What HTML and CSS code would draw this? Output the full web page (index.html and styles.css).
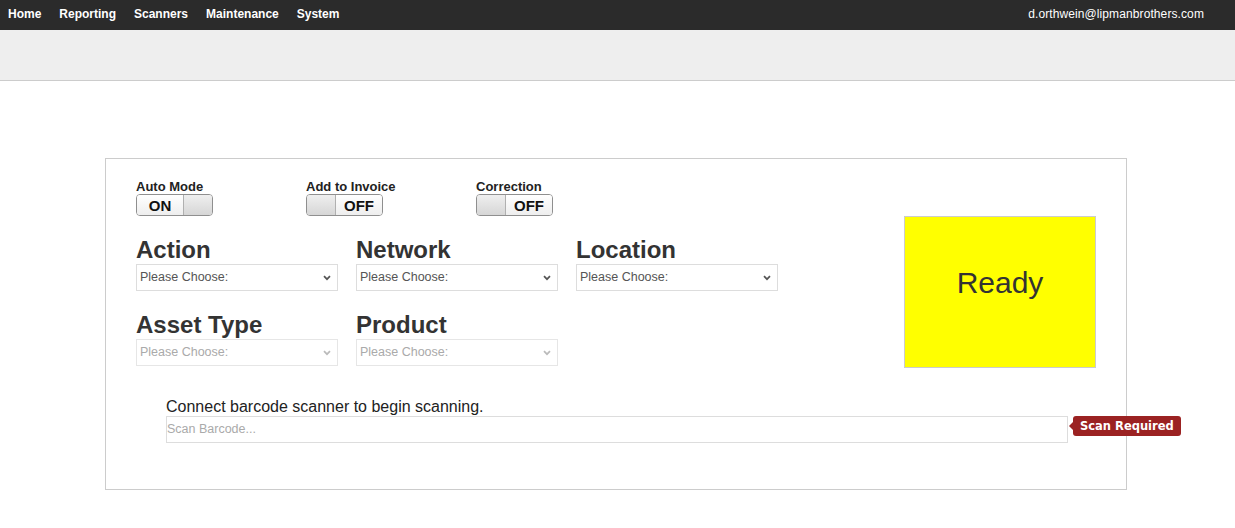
FILE: index.html
```html
<!DOCTYPE html>
<html>
<head>
<meta charset="utf-8">
<title>Scanning</title>
<link rel="stylesheet" href="styles.css">
</head>
<body>
<header class="topnav">
  <nav class="nav-links">
    <a class="nav-link" href="#">Home</a>
    <a class="nav-link" href="#">Reporting</a>
    <a class="nav-link" href="#">Scanners</a>
    <a class="nav-link" href="#">Maintenance</a>
    <a class="nav-link" href="#">System</a>
  </nav>
  <div class="nav-user">d.orthwein@lipmanbrothers.com</div>
</header>
<div class="subbar"></div>

<main class="panel">
  <div class="top-area">
    <div class="form-area">
      <div class="toggles">
        <div class="toggle-group">
          <div class="toggle-label">Auto Mode</div>
          <div class="toggle">
            <span class="toggle-text on">ON</span>
            <span class="toggle-knob knob-right"></span>
          </div>
        </div>
        <div class="toggle-group">
          <div class="toggle-label">Add to Invoice</div>
          <div class="toggle">
            <span class="toggle-knob knob-left"></span>
            <span class="toggle-text off">OFF</span>
          </div>
        </div>
        <div class="toggle-group">
          <div class="toggle-label">Correction</div>
          <div class="toggle">
            <span class="toggle-knob knob-left"></span>
            <span class="toggle-text off">OFF</span>
          </div>
        </div>
      </div>

      <div class="fields">
        <div class="field">
          <h2 class="field-title">Action</h2>
          <div class="select-wrap">
            <select class="select"><option>Please Choose:</option></select>
            <svg class="chev" width="8" height="6" viewBox="0 0 8 6"><path d="M1 1.2 L4 4.2 L7 1.2" fill="none" stroke="#555" stroke-width="1.7"/></svg>
          </div>
        </div>
        <div class="field">
          <h2 class="field-title">Network</h2>
          <div class="select-wrap">
            <select class="select"><option>Please Choose:</option></select>
            <svg class="chev" width="8" height="6" viewBox="0 0 8 6"><path d="M1 1.2 L4 4.2 L7 1.2" fill="none" stroke="#555" stroke-width="1.7"/></svg>
          </div>
        </div>
        <div class="field">
          <h2 class="field-title">Location</h2>
          <div class="select-wrap">
            <select class="select"><option>Please Choose:</option></select>
            <svg class="chev" width="8" height="6" viewBox="0 0 8 6"><path d="M1 1.2 L4 4.2 L7 1.2" fill="none" stroke="#555" stroke-width="1.7"/></svg>
          </div>
        </div>
        <div class="field row2">
          <h2 class="field-title">Asset Type</h2>
          <div class="select-wrap">
            <select class="select" disabled><option>Please Choose:</option></select>
            <svg class="chev" width="8" height="6" viewBox="0 0 8 6"><path d="M1 1.2 L4 4.2 L7 1.2" fill="none" stroke="#bbb" stroke-width="1.7"/></svg>
          </div>
        </div>
        <div class="field row2">
          <h2 class="field-title">Product</h2>
          <div class="select-wrap">
            <select class="select" disabled><option>Please Choose:</option></select>
            <svg class="chev" width="8" height="6" viewBox="0 0 8 6"><path d="M1 1.2 L4 4.2 L7 1.2" fill="none" stroke="#bbb" stroke-width="1.7"/></svg>
          </div>
        </div>
      </div>
    </div>

    <div class="ready-box">Ready</div>
  </div>

  <div class="scan-area">
    <div class="scan-label">Connect barcode scanner to begin scanning.</div>
    <div class="scan-input-wrap">
      <input class="scan-input" type="text" placeholder="Scan Barcode...">
      <div class="scan-tip">Scan Required</div>
    </div>
  </div>
</main>
</body>
</html>
```

FILE: styles.css
```css
* { box-sizing: border-box; }

body {
  margin: 0;
  font-family: "Liberation Sans", Arial, Helvetica, sans-serif;
  color: #333;
  background: #fff;
}

.topnav {
  height: 30px;
  background: #2b2b2b;
  display: flex;
  justify-content: space-between;
  align-items: flex-start;
  padding: 0 31px 0 8px;
}

.nav-links {
  display: flex;
  gap: 18px;
}

.nav-link {
  color: #fff;
  text-decoration: none;
  font-size: 12px;
  font-weight: bold;
  line-height: 28px;
}

.nav-user {
  color: #fff;
  font-size: 12px;
  line-height: 28px;
  letter-spacing: 0.1px;
}

.subbar {
  height: 51px;
  background: #eeeeee;
  border-bottom: 1px solid #cccccc;
}

.panel {
  margin: 77px 0 0 105px;
  width: 1022px;
  height: 332px;
  border: 1px solid #cccccc;
  padding: 21px 30px 0 30px;
}

.top-area {
  display: flex;
  align-items: flex-start;
  justify-content: space-between;
}

.toggles {
  display: flex;
}

.toggle-group {
  width: 170px;
}

.toggle-label {
  font-size: 13px;
  font-weight: bold;
  line-height: 14px;
  color: #222;
}

.toggle {
  display: flex;
  width: 77px;
  height: 22px;
  border: 1px solid #8f8f8f;
  border-radius: 4px;
  overflow: hidden;
}

.toggle-text {
  width: 46px;
  display: flex;
  align-items: center;
  justify-content: center;
  font-size: 15px;
  font-weight: bold;
  color: #111;
  background: linear-gradient(#ffffff, #eeeeee);
}

.toggle-knob {
  flex: 1;
  background: linear-gradient(#efefef, #d6d6d6);
}

.knob-right { border-left: 1px solid #b0b0b0; }
.knob-left { border-right: 1px solid #b0b0b0; }

.fields {
  display: grid;
  grid-template-columns: 202px 202px 202px;
  column-gap: 18px;
}

.field { margin-top: 22px; }

.field-title {
  margin: 0 0 2px 0;
  font-size: 24px;
  line-height: 24px;
  font-weight: bold;
  color: #333;
}

.select-wrap {
  position: relative;
  width: 202px;
  height: 27px;
}

.select {
  appearance: none;
  -webkit-appearance: none;
  width: 202px;
  height: 27px;
  border: 1px solid #dddddd;
  border-radius: 0;
  background: #fff;
  font-family: "Liberation Sans", Arial, sans-serif;
  font-size: 12.5px;
  color: #555;
  padding: 0 3px 1px 3px;
  margin: 0;
}

.select:disabled {
  color: #aaaaaa;
  border-color: #e6e6e6;
  background: #fff;
  opacity: 1;
}

.chev {
  position: absolute;
  right: 7px;
  top: 11px;
  pointer-events: none;
}

.ready-box {
  margin-top: 36px;
  width: 192px;
  height: 152px;
  background: #ffff00;
  border: 1px solid #cccccc;
  text-align: center;
  font-size: 30px;
  line-height: 34px;
  padding-top: 49px;
  color: #333;
}

.scan-area {
  margin: 30px 0 0 30px;
}

.scan-label {
  font-size: 16px;
  line-height: 18px;
  color: #222;
}

.scan-input-wrap {
  position: relative;
  width: 902px;
}

.scan-input {
  display: block;
  width: 902px;
  height: 27px;
  border: 1px solid #dddddd;
  padding: 0 0 1px 0;
  font-family: "Liberation Sans", Arial, sans-serif;
  font-size: 12.5px;
  color: #333;
  outline: none;
  margin: 0;
}

.scan-input::placeholder { color: #aaaaaa; }

.scan-tip {
  position: absolute;
  left: 907px;
  top: 0;
  height: 20px;
  padding: 0 7px;
  background: #9b2222;
  border-radius: 3px;
  color: #fff;
  font-family: "DejaVu Sans", Verdana, sans-serif;
  font-size: 11.5px;
  font-weight: bold;
  line-height: 20px;
  white-space: nowrap;
}

.scan-tip::before {
  content: "";
  position: absolute;
  left: -4px;
  top: 6px;
  border-top: 4px solid transparent;
  border-bottom: 4px solid transparent;
  border-right: 4px solid #9b2222;
}
```
